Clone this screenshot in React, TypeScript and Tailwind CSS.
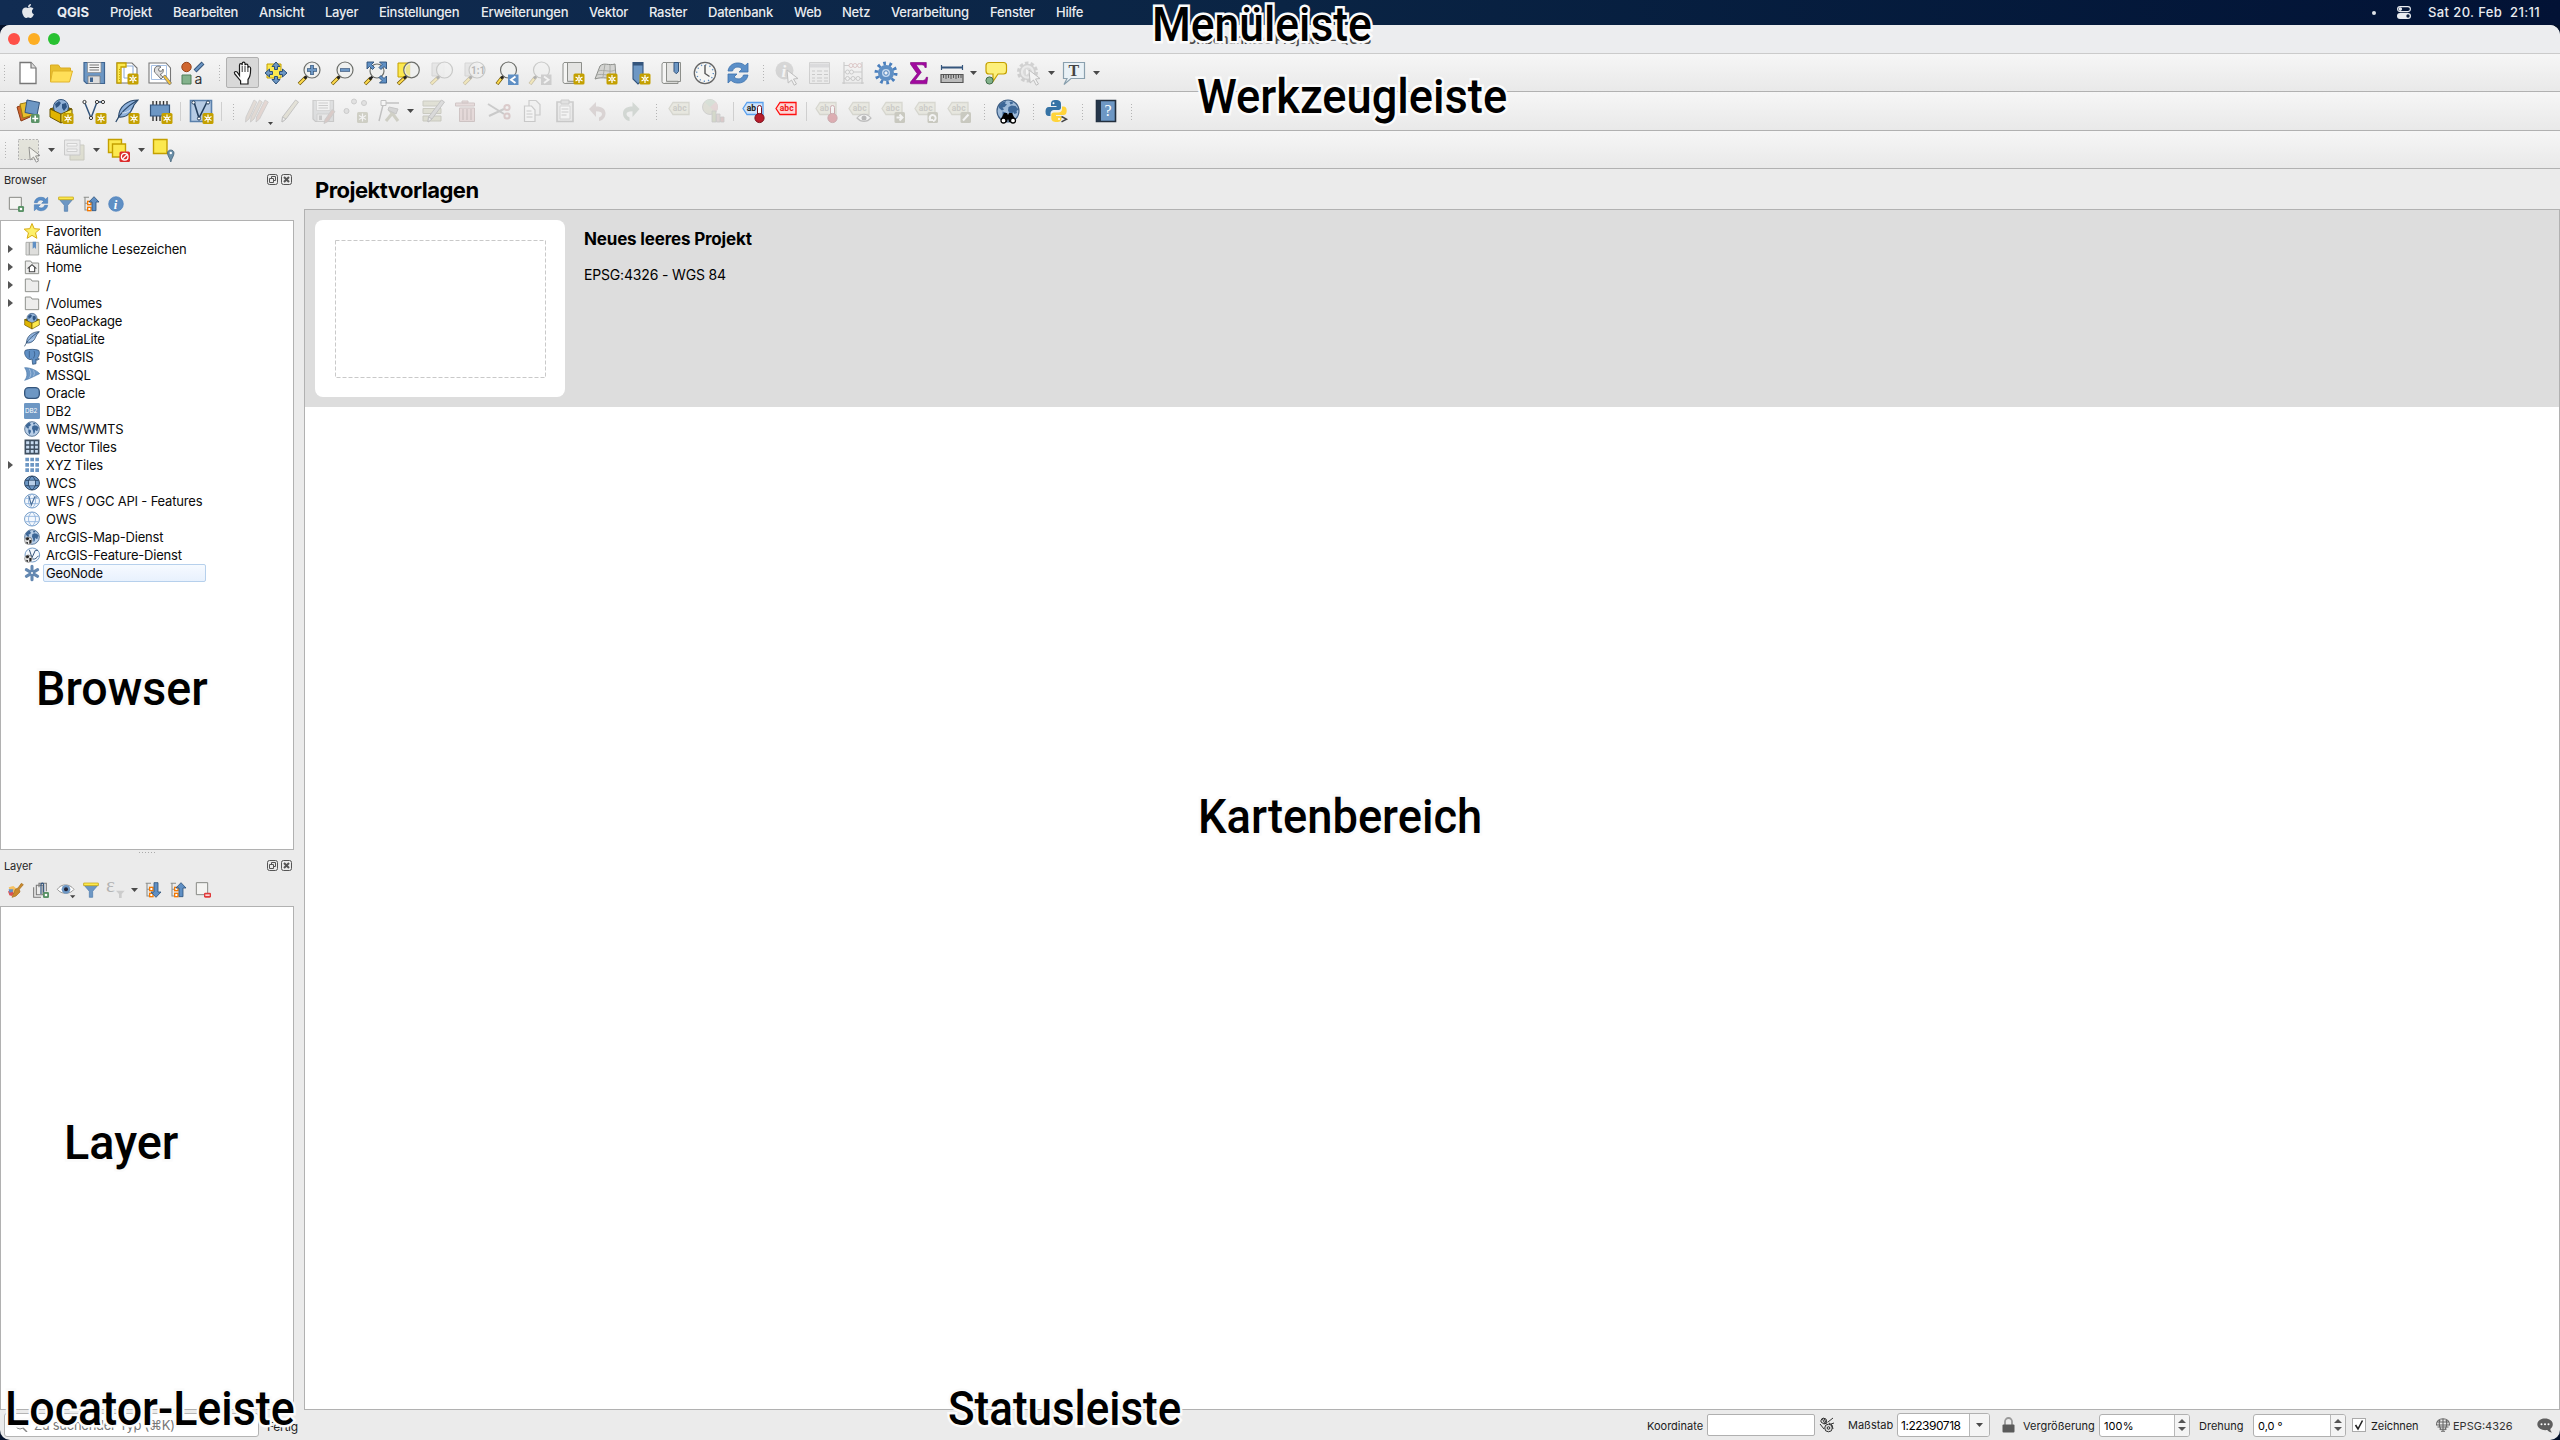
import type { ReactNode } from "react";

type Draw = { children: ReactNode; size?: string; faded?: boolean };

function Svg({ children, size = "size-6", faded }: Draw) {
  return (
    <svg viewBox="0 0 24 24" className={`${size} shrink-0 overflow-visible ${faded ? "opacity-30" : ""}`} fill="none">
      {children}
    </svg>
  );
}

/* ---------- shared icon parts ---------- */

const Badge = ({ x = 12.5, y = 12.5 }: { x?: number; y?: number }) => (
  <g transform={`translate(${x} ${y})`}>
    <rect width="11" height="11" rx="1.6" fill="#c4a000" />
    <path d="M5.5 1.5v8M2 3.5l7 4M9 3.5l-7 4" stroke="#fff" strokeWidth="1.2" />
    <circle cx="5.5" cy="5.5" r="1.7" fill="#fff" />
    <circle cx="5.5" cy="5.5" r=".7" fill="#c4a000" />
  </g>
);

const Lens = ({ cx = 14, cy = 9, r = 8 }: { cx?: number; cy?: number; r?: number }) => (
  <>
    <path d={`M2 23L${cx - 6} ${cy + 7}`} stroke="#6a5200" strokeWidth="3.6" />
    <path d={`M2.3 22.7L${cx - 6.2} ${cy + 7.2}`} stroke="#fcd94f" strokeWidth="2.2" />
    <path d={`M${cx - 7.6} ${cy + 8.6}l3-3`} stroke="#222" strokeWidth="2.6" />
    <circle cx={cx} cy={cy} r={r} fill="#eef0ee" fillOpacity=".85" stroke="#6d6f6b" strokeWidth="1.2" />
  </>
);

const Globe = ({ dark = false }: { dark?: boolean }) => (
  <>
    <circle cx="12" cy="12" r="11" fill={dark ? "#9fbbd9" : "#b9cfe8"} stroke="#3f5f85" strokeWidth="1.2" />
    <path
      d="M3 6.500l3-3 4-1.500-1 2.500 2 1-2.500 2.500-2 .5 1.500 2-2 1-3-2.500zM6.500 12.500l3.500 1 .5 2.500-2.500 4.500-1.500-4zM13.500 3l3-.5.5 2-2.500 1zM12.500 8l3-1.500 4 .5 3 3.500-2 1.500.5 2-2.500 1-1.500-2-1 5-1.500 1.500-1-5-1.500-3z"
      fill="#3d6797"
    />
  </>
);

const Tag = ({ stroke = "#9c9c84", fill = "#d5d5bd", color = "#77776a", text = "abc" }: { stroke?: string; fill?: string; color?: string; text?: string }) => (
  <>
    <path d="M1 9.500L5 3.500H21V15.500H5Z" fill={fill} stroke={stroke} strokeWidth="1.3" />
    <text x="4.800" y="12.400" fontSize="8.500" fontWeight="700" fontFamily="Roboto, sans-serif" fill={color}>{text}</text>
  </>
);

const Arrows = () => (
  <path
    d="M12 1l4 4.500h-2.500v3h-3v-3H8zM12 23l4-4.500h-2.500v-3h-3v3H8zM1 12l4.500-4v2.500h3v3h-3V16zM23 12l-4.500-4v2.500h-3v3h3V16z"
    fill="#6d97c4" stroke="#2c5078" strokeWidth="1"
  />
);

const Refresh = () => (
  <>
    <path d="M2 10C3 4 8 1.500 13 2c3 .3 4.500 1.200 6 2.700L22 2v9h-9l3-3c-3-3-8-2.500-9.500 2z" fill="#5b8fc8" stroke="#3d72ad" strokeWidth=".8" />
    <path d="M22 14c-1 6-6 8.500-11 8-3-.3-4.500-1.200-6-2.700L2 22v-9h9l-3 3c3 3 8 2.500 9.500-2z" fill="#5b8fc8" stroke="#3d72ad" strokeWidth=".8" />
  </>
);

const Scroll = () => (
  <>
    <path d="M5 1.500h15.500v19H5z" fill="#e4e4e2" stroke="#8d8f8b" />
    <path d="M3 1.500h3.500v21H4a2 2 0 0 1-2-2V3z" fill="#f5f5f4" stroke="#8d8f8b" />
    <path d="M4 22.500h14v-2.200H6.500" fill="#d8d8d6" stroke="#8d8f8b" />
  </>
);

const Feather = () => (
  <>
    <path d="M23 1C13 1 4 7 3.500 18c5 .5 9-1 12-5 1-2 3-5 3.500-7z" fill="#8fb2dc" stroke="#2c4a6c" strokeWidth="1.100" />
    <path d="M.8 23C4 16 11 8 22 1.500" stroke="#2c4a6c" strokeWidth="1.200" />
    <path d="M7 14c3 0 6-1 8.500-3" stroke="#e6eef7" strokeWidth=".8" />
  </>
);

const Package = () => (
  <>
    <path d="M1 10l11-4 11 4-11 5z" fill="#806600" stroke="#6b5600" />
    <circle cx="12" cy="8" r="7.500" fill="#8fb0d6" stroke="#34557c" />
    <path d="M6 5l4-3 2 2-2 3-3 2zM13 5l4-1 1 4-3 4-2-3z" fill="#2e5583" />
    <path d="M1 10l11 5v9L1 18z" fill="#e0b400" stroke="#6b5600" />
    <path d="M23 10l-11 5v9l11-6z" fill="#fce94f" stroke="#6b5600" />
  </>
);

const Tree = ({ up }: { up?: boolean }) => (
  <>
    <path d="M1 2h8M3 2v19h6M3 11h6" stroke="#8d8f8b" strokeWidth="1.600" />
    <rect x="7" y="8" width="5" height="5" fill="#fff" stroke="#f57900" strokeWidth="2" />
    <rect x="7" y="17" width="5" height="5" fill="#fff" stroke="#f57900" strokeWidth="2" />
    {up ? (
      <path d="M16.500 1L24 9h-4.500v13h-6V9H9z" fill="#5f8fc4" stroke="#2c5078" strokeWidth="1.200" />
    ) : (
      <path d="M16.500 23L24 15h-4.500V1h-6v14H9z" fill="#5f8fc4" stroke="#2c5078" strokeWidth="1.200" />
    )}
  </>
);

const Funnel = () => (
  <>
    <path d="M1 4h22l-8.500 10v9h-5v-9z" fill="#6d97c4" stroke="#4a78ab" />
    <path d="M1 1.500h22v4H1z" fill="#fce94f" stroke="#c4a000" />
  </>
);

const Cursor = () => <path d="M12 9l11 8.500-4.500 .5 3 5-2.300 1.200-2.700-5.200-3.300 3z" fill="#fff" stroke="#555" />;

const Pencil = ({ fill = "#8a6a3a" }: { fill?: string }) => (
  <>
    <path d="M17.500 1l3 2L8 20l-4 3 .5-5z" fill={fill} stroke="#555" strokeWidth=".9" />
    <path d="M4.500 18L8 20l-4 3z" fill="#eee" stroke="#555" strokeWidth=".9" />
  </>
);

const Thermo = () => (
  <>
    <path d="M15.500 8.500a2 2 0 0 1 4 0V16h-4z" fill="#fff" stroke="#7a1420" />
    <circle cx="17.500" cy="19" r="4.600" fill="#b81d2c" stroke="#7a1420" />
  </>
);

/* ---------- toolbar 1 ---------- */

const NewFile = () => (
  <Svg><path d="M4 1.500h11l5 5.500v15.500H4z" fill="#fff" stroke="#777" strokeWidth="1.300" /><path d="M15 1.500V7h5" fill="#ddd" stroke="#777" strokeWidth="1.200" /></Svg>
);
const OpenFolder = () => (
  <Svg>
    <path d="M1.500 20V4h8l2 3h10v4H5z" fill="#e8bf2e" stroke="#d9ab22" />
    <path d="M1.500 21l2-11h20l-3 11z" fill="#ffdf58" stroke="#e0b32b" />
  </Svg>
);
const Save = ({ faded }: { faded?: boolean }) => (
  <Svg faded={faded}>
    <path d="M2 1.500h20.500v21H4.500L2 20z" fill={faded ? "#b5b8bb" : "#6d97c4"} stroke={faded ? "#777" : "#3f6591"} strokeWidth="1.200" />
    <path d="M5.500 1.500h13.500v10H5.500z" fill="#f4f4f4" stroke="#888" strokeWidth=".7" />
    <path d="M7.500 4h9.500M7.500 6.500h9.500M7.500 9h9.500" stroke="#777" />
    <path d="M6 15h12v7.500H6z" fill="#ddd" stroke="#777" strokeWidth=".7" />
    <path d="M8 16.500h3V21H8z" fill={faded ? "#777" : "#3f6591"} />
    {faded && <path d="M13 24.500l1-4 7-10 3 2-7 10z" fill="#a87a70" stroke="#777" strokeWidth=".8" />}
  </Svg>
);
const Layout = () => (
  <Svg>
    <path d="M2 2h15l5 5v15H2z" fill="#fff" stroke="#777" strokeWidth="1.100" />
    <path d="M9 5h9v12h-9z" fill="#fff" stroke="#8aa9d6" />
    <path d="M2 2h9v4H6v16H2z" fill="#fce94f" stroke="#c4a000" strokeWidth="1.300" />
    <path d="M4.500 8v12" stroke="#c4a000" strokeDasharray="1 1.500" />
    <Badge />
  </Svg>
);
const LayoutManager = () => (
  <Svg>
    <path d="M1 2h17l4.500 5v15H1z" fill="#fff" stroke="#777" strokeWidth="1.100" />
    <path d="M3.500 4.500h15v14h-15z" stroke="#a6c0e4" />
    <path d="M6.500 8a4 4 0 0 1 6.500-2l-2.500 1.800.5 2.200 2.500.3L15 8a4 4 0 0 1-3 5.500l3 2.500-2 2-4.500-5A4 4 0 0 1 6.500 8z" fill="#ddd" stroke="#666" strokeWidth=".9" />
    <path d="M15 15.500l2-1.500 6.500 8-2 2z" fill="#f2c23c" stroke="#777" strokeWidth=".8" />
  </Svg>
);
const StyleManager = () => (
  <Svg>
    <circle cx="5.500" cy="6" r="4.700" fill="#d0662f" stroke="#96431a" />
    <path d="M14 10l8-8" stroke="#34557c" strokeWidth="4" /><path d="M14.500 9.500l7-7" stroke="#6d97c4" strokeWidth="2.200" />
    <path d="M1 14h9v9H1z" fill="#83b28c" stroke="#4f7f58" />
    <text x="13.500" y="22.500" fontSize="14" fontFamily="Inter, sans-serif" fill="#333">a</text>
  </Svg>
);
const Hand = () => (
  <Svg>
    <path d="M8.500 14.500V4.200c0-2 2.700-2 2.700 0V2.600c0-2 2.800-2 2.800 0v1.600c.3-1.700 2.900-1.500 2.900.3v2c.4-1.300 2.700-1 2.700.8 0 5 .2 8-2.600 11.200V23H9.600v-3.200C7.500 17.500 6 15.500 3.800 13c-1.300-1.800.9-3.300 2.400-1.900z" fill="#fff" stroke="#1c1c1c" strokeWidth="1.200" />
    <path d="M11.200 5v6M14 5v6M16.900 6v5" stroke="#1c1c1c" strokeWidth=".9" />
  </Svg>
);
const PanSelection = () => (<Svg><path d="M3 3h14v14H3z" fill="#fce94f" stroke="#c4a000" /><Arrows /></Svg>);
const ZoomIn = () => (<Svg><Lens cx={15} /><path d="M15 4v10M10 9h10" stroke="#34557c" strokeWidth="3.600" /><path d="M15 4.500v9M10.500 9h9" stroke="#6d97c4" strokeWidth="2" /></Svg>);
const ZoomOut = () => (<Svg><Lens cx={15} /><path d="M10 9h10" stroke="#34557c" strokeWidth="3.600" /><path d="M10.500 9h9" stroke="#6d97c4" strokeWidth="2" /></Svg>);
const ZoomFull = () => (
  <Svg>
    <Lens cx={14} cy={10} r={7} />
    <path d="M4 1h7L8.500 3.500l3 3-2 2-3-3L4 8zM23.500 1h-7L19 3.500l-3 3 2 2 3-3L23.500 8zM23.500 22h-7l2.500-2.500-3-3 2-2 3 3 2.500-2.500z" fill="#5f8fc4" stroke="#2c5078" strokeWidth=".9" />
  </Svg>
);
const ZoomSelection = () => (<Svg><path d="M2 2h12v14H2z" fill="#fce94f" stroke="#c4a000" /><Lens cx={15.500} cy={9} r={7.800} /><path d="M14 3.200a6 6 0 0 0 0 11.600z" fill="#ece27a" fillOpacity=".8" /></Svg>);
const ZoomLayer = () => (<Svg faded><path d="M3 2h12v13H3z" fill="#ccc" stroke="#999" /><Lens cx={15.500} /></Svg>);
const ZoomNative = () => (<Svg faded><path d="M3 2h12v13H3z" fill="#ccc" stroke="#999" /><Lens cx={15} /><text x="9" y="13" fontSize="10" fontWeight="700" fontFamily="Roboto, sans-serif" fill="#333">1:1</text></Svg>);
const ZoomLast = () => (<Svg><Lens cx={13.500} /><path d="M13 13.500h10.500V24H13z" fill="#5f8fc4" /><path d="M20.500 15.500l-4.500 3.300 4.500 3.300" stroke="#fff" strokeWidth="1.900" /></Svg>);
const ZoomNext = () => (<Svg faded><Lens cx={13.500} /><path d="M13 13.500h10.500V24H13z" fill="#888" /><path d="M16 15.500l4.500 3.300-4.500 3.300" stroke="#fff" strokeWidth="1.900" /></Svg>);
const NewMap = () => (<Svg><Scroll /><Badge /></Svg>);
const New3D = () => (
  <Svg>
    <path d="M6 5c4-4 9 0 15-2l1 13c-6 3-13-1-21 2z" fill="#d4d4d2" stroke="#8d8f8b" />
    <path d="M11 3l-2 13M16 4v13M4 10c6-2 12 2 17-1M2.500 14c7-2 13 2 19-1" stroke="#a5a7a3" strokeWidth=".9" />
    <Badge />
  </Svg>
);
const NewBookmark = () => (<Svg><path d="M6 1.500h10v17l-5 4.500-5-5z" fill="#6d97c4" stroke="#34557c" strokeWidth="1.100" /><path d="M6 1.500h10v3H6z" fill="#34557c" /><Badge /></Svg>);
const Bookmarks = () => (<Svg><Scroll /><path d="M14 1.500h4.500v9l-2.200 2.300L14 10.500z" fill="#6d97c4" stroke="#34557c" /></Svg>);
const Clock = () => (
  <Svg>
    <circle cx="12" cy="12" r="10.700" fill="#f6f6f4" stroke="#666" strokeWidth="1.300" />
    <circle cx="12" cy="12" r="8.300" stroke="#5f8fc4" strokeWidth="1.400" strokeDasharray="1.200 3.146" />
    <path d="M12 4v8.500l4.500 3" stroke="#555" strokeWidth="1.400" />
  </Svg>
);
const Identify = () => (<Svg faded><circle cx="9.500" cy="9.500" r="9" fill="#999" /><text x="6.500" y="16" fontSize="17" fontStyle="italic" fontWeight="700" fontFamily="Liberation Serif, serif" fill="#fff">i</text><Cursor /></Svg>);
const Table = () => (<Svg faded><path d="M1.500 1.500h20v21h-20z" fill="#e6e6e6" stroke="#888" /><path d="M2 4.500h19" stroke="#a5a5aa" strokeWidth="4" /><path d="M4 10h3M9 10h5M16 10h4M4 13.500h3M9 13.500h5M16 13.500h4M4 17h3M9 17h5M16 17h4M4 20h3M9 20h5M16 20h4" stroke="#777" strokeWidth="1.200" /></Svg>);
const Abacus = () => (
  <Svg faded>
    <path d="M3 1v22M21 1v22M3 4.500h18M3 11h18M3 17.500h18M1 22h22" stroke="#777" strokeWidth="1.200" />
    <g fill="#f4f4f4" stroke="#777">
      <circle cx="10" cy="4.500" r="2" stroke="#a66" /><circle cx="14" cy="4.500" r="2" stroke="#a66" /><circle cx="18.500" cy="4.500" r="2" stroke="#a66" />
      <circle cx="6.500" cy="11" r="2" /><circle cx="10.500" cy="11" r="2" />
      <circle cx="6.500" cy="17.500" r="2" /><circle cx="12" cy="17.500" r="2" /><circle cx="17" cy="17.500" r="2" />
    </g>
  </Svg>
);
const Gear = () => (
  <Svg>
    <circle cx="12" cy="12" r="9.500" stroke="#4a7fbd" strokeWidth="4" strokeDasharray="2.600 3.370" />
    <circle cx="12" cy="12" r="6" fill="#c4d8ee" stroke="#5f8fc4" strokeWidth="4" />
    <circle cx="12" cy="12" r="2.200" fill="#eef2f6" stroke="#4a7fbd" />
  </Svg>
);
const RunAction = () => (
  <Svg faded>
    <circle cx="10.500" cy="11" r="9" stroke="#888" strokeWidth="3" strokeDasharray="3.500 2.155" />
    <circle cx="10.500" cy="11" r="7.500" fill="#ddd" stroke="#888" strokeWidth="1.600" />
    <circle cx="10.500" cy="11" r="4.500" fill="#aaa" /><path d="M9 8l4.500 3L9 14z" fill="#fff" />
    <Cursor />
  </Svg>
);
const Sigma = () => (<Svg><path d="M3.500 1.500h15.800v5h-1.400c-.4-2-1.100-2.700-3.200-2.700H9l5.300 7.500L8 19.500h7.600c2.300 0 3-1 3.600-3.200h1.500l-.9 6.500H3.500V21l6.700-8.300-6.700-9.500z" fill="#a1099f" stroke="#7b007a" strokeWidth=".6" /></Svg>);
const Measure = () => (
  <Svg>
    <path d="M1.500 6.500h21" stroke="#34557c" strokeWidth="1.800" /><path d="M1.500 4v5M22.500 4v5" stroke="#34557c" strokeWidth="1.200" />
    <path d="M1 13.500h22v8H1z" fill="#bbb" stroke="#555" strokeWidth="1.200" />
    <path d="M3.500 14v3M6 14v4M8.500 14v3M11 14v4M13.500 14v3M16 14v4M18.500 14v3M21 14v3" stroke="#555" />
  </Svg>
);
const Tips = () => (
  <Svg>
    <path d="M5 1.500h14.500c2 0 3 1.300 3 3v5.500c0 2-1 3-3 3H14l-5 7.500V13H5c-2 0-3-1-3-3V4.500c0-1.700 1-3 3-3z" fill="#fdf07a" stroke="#c4a000" strokeWidth="1.200" />
    <circle cx="5.500" cy="19.500" r="3.600" fill="#83b28c" stroke="#3f6b48" />
  </Svg>
);
const Annotation = () => (
  <Svg>
    <path d="M1.500 1.500h21v16H9L2 23.500l3-6H1.500z" fill="#e9f1f6" stroke="#8aa0ae" strokeWidth="1.200" />
    <text x="6.500" y="14.800" fontSize="16" fontWeight="700" fontFamily="Liberation Serif, serif" fill="#444">T</text>
  </Svg>
);

/* ---------- toolbar 2 ---------- */

const AddLayer = () => (
  <Svg>
    <path d="M1 8l8-3 5 13-9 4z" fill="#d0662f" stroke="#8a3a14" />
    <path d="M4 5l9-2 4 13-10 3z" fill="#e8bf2e" stroke="#9a7a10" />
    <path d="M11 1l12.500 2.500L21 16 9 13.500z" fill="#6d97c4" stroke="#34557c" />
    <rect x="15" y="15" width="8.500" height="9" rx="1.500" fill="#5a9266" /><path d="M19.200 16.500v6M16.200 19.500h6" stroke="#fff" strokeWidth="1.600" />
  </Svg>
);
const NewGeoPackage = () => (<Svg><Package /><Badge x={13.500} y={14} /></Svg>);
const NewShape = () => (
  <Svg>
    <path d="M2.500 3L9 19l6-16h6" stroke="#34557c" strokeWidth="1.500" />
    <g fill="#fff" stroke="#333"><circle cx="2.500" cy="3" r="1.600" /><circle cx="9" cy="19" r="1.600" /><circle cx="15" cy="3" r="1.600" /><circle cx="21" cy="3" r="1.600" /></g>
    <Badge x={13.500} y={14} />
  </Svg>
);
const NewSpatialite = () => (<Svg><Feather /><Badge x={13.500} y={14} /></Svg>);
const NewMemory = () => (
  <Svg>
    <path d="M5 2v20M8.500 2v20M12 2v20M15.500 2v20M19 2v20" stroke="#333" strokeWidth="1.400" />
    <path d="M2.500 6h19v11h-19z" fill="#6d97c4" stroke="#34557c" strokeWidth="1.200" />
    <Badge x={13.500} y={14} />
  </Svg>
);
const NewVirtual = () => (
  <Svg>
    <path d="M1.500 1.500h21v21h-21z" fill="#b6cbe4" stroke="#5a80ab" strokeWidth="1.600" />
    <path d="M5 3l5 16 8-16" stroke="#25405f" strokeWidth="1.600" />
    <g fill="#fff" stroke="#25405f"><circle cx="4.500" cy="3.500" r="1.600" /><circle cx="10" cy="19.500" r="1.600" /><circle cx="19" cy="3.500" r="1.600" /></g>
    <Badge x={13.500} y={14} />
  </Svg>
);
const Edits = () => (
  <Svg faded>
    <path d="M9 1l2.800 2L4 20l-3.500 3 .5-5z" fill="#c2aa98" stroke="#777" strokeWidth=".8" />
    <path d="M14.500 1l2.800 2L9 20l-3.500 3 .5-5z" fill="#c2aa98" stroke="#777" strokeWidth=".8" />
    <path d="M20 1l3.300 2L14.500 20 11 23l.5-5z" fill="#c79c8e" stroke="#777" strokeWidth=".8" />
  </Svg>
);
const ToggleEdit = () => (<Svg faded><Pencil fill="#c4bd9c" /></Svg>);
const AddPoints = () => (
  <Svg faded>
    <g fill="#bbb" stroke="#777"><circle cx="10" cy="2.500" r="2.500" /><circle cx="2.500" cy="12" r="2.500" /><circle cx="20" cy="4" r="2.500" /></g>
    <g transform="translate(13 13)"><rect width="11" height="11" rx="1.600" fill="#8a8a6a" /><path d="M5.500 1.500v8M2 3.500l7 4M9 3.500l-7 4" stroke="#fff" strokeWidth="1.200" /></g>
  </Svg>
);
const VertexTool = () => (
  <Svg faded>
    <path d="M2 22L6 6M8 4h14" stroke="#555" strokeWidth="1.400" /><path d="M4 1.500h5v5H4z" fill="#fff" stroke="#555" />
    <path d="M9 22l9-11M12 10l9 12" stroke="#8a8a6a" strokeWidth="3" /><path d="M12 8l9 2-2 5-8-4z" fill="#999" stroke="#666" />
  </Svg>
);
const MultiEdit = () => (
  <Svg faded><path d="M2 2h18v5H2zM2 9.500h18v5H2zM2 17h18v5H2z" fill="#b9b995" stroke="#77775a" /><g transform="translate(3 0)"><Pencil fill="#aaa" /></g></Svg>
);
const Trash = () => (
  <Svg faded>
    <path d="M1.500 4h19v3h-19zM8 2h6v2H8z" fill="#d0aaaa" stroke="#866" /><path d="M5.500 9h15v13.500h-15z" fill="#d0aaaa" stroke="#866" />
    <path d="M9 10v11M13 10v11M17 10v11" stroke="#866" strokeWidth="1.400" />
  </Svg>
);
const Cut = () => (
  <Svg faded><path d="M1 5l16 10M2 17l15-7" stroke="#777" strokeWidth="2" /><circle cx="20" cy="8.500" r="2.600" stroke="#a77" strokeWidth="2" /><circle cx="20" cy="17" r="2.600" stroke="#a77" strokeWidth="2" /></Svg>
);
const Copy = () => (
  <Svg faded><path d="M9 1.500h7l4 4V16H9z" fill="#eee" stroke="#777" strokeWidth="1.200" /><path d="M4.500 7h7l3.500 4v11.500H4.500z" fill="#fff" stroke="#777" strokeWidth="1.200" /><path d="M6.500 12h5M6.500 15h6M6.500 18h6" stroke="#777" /></Svg>
);
const Paste = () => (
  <Svg faded><path d="M4 3h16v19.500H4z" fill="#ddd" stroke="#777" strokeWidth="1.600" /><path d="M8 1h8v4H8z" fill="#bbb" stroke="#777" /><path d="M7 7h10v13H7z" fill="#fff" stroke="#999" /><path d="M8.500 10h7M8.500 13h7M8.500 16h5" stroke="#777" /></Svg>
);
const Undo = () => (<Svg faded><path d="M3 10l7-7v4.500c6 0 9.500 2.500 9.500 7 0 4-3 7-6.500 7.500v-3.500c2-.8 3-2 3-3.500 0-2-2-2.800-6-2.800v5.800z" fill="#a89494" /></Svg>);
const Redo = () => (<Svg faded><path d="M20.500 10l-7-7v4.500c-6 0-9.500 2.500-9.500 7 0 4 3 7 6.500 7.500v-3.500c-2-.8-3-2-3-3.500 0-2 2-2.800 6-2.800v5.800z" fill="#8f9e93" /></Svg>);
const LabelOff = () => (<Svg faded><Tag /></Svg>);
const Diagram = () => (
  <Svg faded>
    <circle cx="9" cy="8" r="7.500" fill="#b5b59a" stroke="#777" strokeWidth=".8" /><path d="M9 8l6-5a7.500 7.500 0 0 1 0 10z" fill="#c79a9a" /><path d="M9 8L3.500 3a7.500 7.500 0 0 1 11 0z" fill="#9ab59a" />
    <path d="M11 12h4v11h-4z" fill="#9aa97a" stroke="#777" strokeWidth=".8" /><path d="M15.500 15h3.500v8h-3.500z" fill="#b59a9a" stroke="#777" strokeWidth=".8" /><path d="M19.500 18H23v5h-3.500z" fill="#b57a7a" stroke="#777" strokeWidth=".8" />
  </Svg>
);
const LabelPin = () => (<Svg><Tag stroke="#5aa0ee" fill="#cfe4fb" color="#222" text="ab" /><Thermo /></Svg>);
const LabelRed = () => (<Svg><Tag stroke="#ff1010" fill="#fdd6d6" color="#f01414" /></Svg>);
const LabelPinOff = () => (<Svg faded><Tag text="ab" /><Thermo /></Svg>);
const LabelEye = () => (<Svg faded><Tag /><path d="M9 19c4-5 10-5 14 0-4 4.500-10 4.500-14 0z" fill="#fff" stroke="#555" strokeWidth="1.200" /><circle cx="16" cy="19" r="2.500" fill="#444" /></Svg>);
const LabelBox = ({ d }: { d: string }) => (<Svg faded><Tag /><rect x="13.500" y="13" width="10.500" height="11" rx="1.500" fill="#77775a" /><path d={d} stroke="#fff" strokeWidth="2" /></Svg>);
const MetaSearch = () => (
  <Svg>
    <Globe dark />
    <path d="M5 20l3-6h3l1 2 1-2h3l3 6-2 3h-4l-1-3-1 3H7z" fill="#000" />
    <circle cx="7.500" cy="21.500" r="2.500" fill="#fff" stroke="#000" strokeWidth="1.300" /><circle cx="17" cy="21.500" r="2.500" fill="#fff" stroke="#000" strokeWidth="1.300" />
  </Svg>
);
const Python = () => (
  <Svg>
    <path d="M11 1c-4 0-5 1.500-5 4v2h5.500v1H4c-2.500 0-3.500 2-3.500 4.700S1.500 17 4 17h1.500v-2.500c0-2 1.500-3.500 3.500-3.500h4.500c1.700 0 2.500-1 2.500-2.500V5c0-3-2-4-5-4z" fill="#3673a5" />
    <path d="M11.500 23c4 0 5-1.500 5-4v-2H11v-1h7.500c2.500 0 3.200-2 3.200-4.500S20.500 7.500 18.500 7.500H17V10c0 2-1.500 3.500-3.500 3.500H9c-1.700 0-2.700 1-2.700 2.500v3c0 3 2.200 4 5.200 4z" fill="#ffd43b" />
    <circle cx="8.500" cy="4.200" r="1" fill="#fff" /><circle cx="14" cy="20" r="1" fill="#fff" />
    <path d="M16.500 17.500l5 2.700-5 2.700" stroke="#444" strokeWidth="1.500" />
  </Svg>
);
const Help = () => (
  <Svg>
    <path d="M2.500 1.500h19v21h-19z" fill="#6d97c4" stroke="#222e3c" strokeWidth="1.600" /><path d="M2.500 1.500H7v21H2.500z" fill="#25364a" />
    <text x="10.500" y="17" fontSize="16" fontFamily="Liberation Serif, serif" fill="#fff">?</text>
  </Svg>
);

/* ---------- toolbar 3 ---------- */

const SelectFeatures = () => (<Svg><g opacity=".4"><path d="M1.500 1.500h20v20h-20z" fill="#cfcfba" stroke="#555" strokeDasharray="2 1.500" /></g><g opacity=".55"><Cursor /></g></Svg>);
const SelectForm = () => (<Svg faded><path d="M8 7h14v15H8z" fill="#b9b98f" stroke="#77775a" /><path d="M2.500 2h15.500v15H2.500z" fill="#ddd" stroke="#777" /><path d="M5 5.500h10v2.500H5zM5 11h10v2.500H5z" fill="#fff" stroke="#888" /></Svg>);
const Deselect = () => (
  <Svg>
    <path d="M1.500 1.500h13v13h-13z" fill="#fce94f" stroke="#c4a000" strokeWidth="1.400" /><path d="M5.500 6h13v13h-13z" fill="#fce94f" stroke="#c4a000" strokeWidth="1.400" />
    <rect x="12.500" y="13.500" width="10.500" height="10.500" rx="1.500" fill="#dc2b2b" /><circle cx="17.700" cy="18.700" r="3.300" stroke="#fff" strokeWidth="1.300" /><path d="M15.500 21l4.500-4.500" stroke="#fff" strokeWidth="1.200" />
  </Svg>
);
const SelectLocation = () => (
  <Svg>
    <path d="M1.500 1.500h13.500v14H1.500z" fill="#fce94f" stroke="#c4a000" strokeWidth="1.400" />
    <path d="M15.500 15c0-4 6.500-4 6.500 0 0 3-2.300 5-3.200 9-.9-4-3.300-6-3.300-9z" fill="#6a8fa8" stroke="#46667c" strokeWidth=".8" /><circle cx="18.800" cy="15" r="1.200" fill="#fff" />
  </Svg>
);

/* ---------- panels ---------- */

const AddSmall = () => (<Svg size="size-4"><path d="M2 2h18v18H2z" fill="#f4f4f2" stroke="#888a85" strokeWidth="1.500" /><rect x="15" y="15" width="9" height="9" rx="2" fill="#5a9266" /><circle cx="19.500" cy="19.500" r="2" fill="#fff" /></Svg>);
const RemoveSmall = () => (<Svg size="size-4"><path d="M2 1h17v18H2z" fill="#f4f4f2" stroke="#888a85" strokeWidth="1.500" /><rect x="13.500" y="16" width="10.500" height="7.500" rx="2" fill="#e03a3a" /><path d="M15.500 19.700h6.500" stroke="#fff" strokeWidth="2" /></Svg>);
const Info = () => (<Svg size="size-4"><circle cx="12" cy="12" r="11" fill="#5f8fc4" stroke="#4a7fbd" /><text x="8.500" y="19" fontSize="19" fontStyle="italic" fontWeight="700" fontFamily="Liberation Serif, serif" fill="#fff">i</text></Svg>);
const Brush = () => (
  <Svg size="size-4">
    <path d="M1 8l7-2 5 4-4 5-6-1z" fill="#f6c163" /><path d="M0 14l6-1 3 4-3 4-4-1z" fill="#e05050" /><path d="M1 11l7 0-1 4-5 1z" fill="#5f8fc4" />
    <path d="M11 11l4-2 5-7 3 2-6 7 1 4-6 6-6 2z" fill="#c98a2d" stroke="#a56b1a" />
  </Svg>
);
const AddGroup = () => (
  <Svg size="size-4">
    <path d="M1 8v15h11M5 5v14h10V5zM9 8V2h11v12" stroke="#777" strokeWidth="1.600" fill="none" /><path d="M12 18V4c0-3 4-3 4 0v12" stroke="#34557c" strokeWidth="1.800" />
    <rect x="15" y="15" width="9" height="9" rx="2" fill="#5a9266" /><circle cx="19.500" cy="19.500" r="2" fill="#fff" />
  </Svg>
);
const Eye = () => (
  <Svg size="size-4">
    <path d="M-1 11C5 2 17 2 24 11c-6 8-19 8-25 0z" fill="#fff" stroke="#999" strokeWidth="1.500" /><circle cx="12" cy="11" r="6.500" fill="#6d97c4" /><circle cx="12" cy="11" r="3" fill="#223" />
    <path d="M18 20h8l-4 4.500z" fill="#444" />
  </Svg>
);
const Epsilon = () => (
  <Svg size="size-4" faded><text x="-3" y="15" fontSize="32" fontFamily="Liberation Serif, serif" fill="#333">ε</text><path d="M12 13h13l-4.500 5v6h-4v-6z" fill="#888" /></Svg>
);

const Star = () => (<Svg size="size-4"><path d="M12 .8l3.300 7.700 8.400.7-6.400 5.500 2 8.300L12 18.500 4.700 23l2-8.300L.3 9.200l8.400-.7z" fill="#fdf06a" stroke="#d8ac10" strokeWidth="1.500" /></Svg>);
const BookSmall = () => (<Svg size="size-4"><path d="M3 2h5v19H3zM8 2h14v19H8z" fill="#dededc" stroke="#a5a7a3" strokeWidth="1.300" /><path d="M13 1h5v11l-2.500-2.500L13 12z" fill="#5f8fc4" /></Svg>);
const FolderSmall = ({ home }: { home?: boolean }) => (
  <Svg size="size-4"><path d="M2 3h8l2 3h10v16H2z" fill="#ededec" stroke="#888a85" strokeWidth="1.400" />{home && <path d="M6.500 13.500l5.500-5 5.500 5H16V19H8v-5.500z" fill="#fff" stroke="#444" strokeWidth="1.600" />}</Svg>
);
const Elephant = () => (<Svg size="size-4"><path d="M2 2c6-2 15-2 20 0 2 3 1 9-2 12l3 1-4 2-1-2v7l-5 1-1-8-3 1-4-2C1 10 0 5 2 2z" fill="#5f8fc4" stroke="#34557c" strokeWidth="1.200" /><path d="M8 3v10M15 3c2 4 1 8-1 11" stroke="#34557c" /></Svg>);
const Sail = () => (<Svg size="size-4"><path d="M1 1c9 0 18 4 22.500 9C17 13 10 17 1 20c5-6 4-13 0-19z" fill="#6d97c4" stroke="#4a78ab" /><path d="M8 3c3 5 3 9 0 14M14 5c2 3 2 6 0 9" stroke="#b9cfe8" strokeWidth="1" /></Svg>);
const Oracle = () => (<Svg size="size-4"><rect x="1" y="4" width="22" height="16" rx="6" fill="#6d97c4" stroke="#34557c" strokeWidth="2" /></Svg>);
const Db2 = () => (<Svg size="size-4"><rect width="24" height="24" rx="2" fill="#6d97c4" /><text x="1.500" y="15" fontSize="9.500" fontFamily="Inter, sans-serif" fill="#fff">DB2</text></Svg>);
const GlobeSmall = () => (<Svg size="size-4"><Globe /></Svg>);
const Grid = () => (<Svg size="size-4"><path d="M2 2h20v20H2z" fill="#c8dbf0" stroke="#3f4f60" strokeWidth="2.400" /><path d="M9 2v20M15.500 2v20M2 9h20M2 15.500h20" stroke="#3f4f60" strokeWidth="2.200" /></Svg>);
const Dots = () => (<Svg size="size-4"><path d="M2 1h5.500v5.500H2zM9.500 1H15v5.500H9.500zM17 1h5.500v5.500H17zM2 9h5.500v5.500H2zM9.500 9H15v5.500H9.500zM17 9h5.500v5.500H17zM2 17h5.500v5.500H2zM9.500 17H15v5.500H9.500zM17 17h5.500v5.500H17z" fill="#6d97c4" /></Svg>);
const Wire = ({ v, dark }: { v?: boolean; dark?: boolean }) => (
  <Svg size="size-4">
    <ellipse cx="12" cy="12" rx="11.200" ry="10.500" fill={dark ? "#6d97c4" : "#f4f8fd"} stroke={dark ? "#25405f" : "#6d97c4"} strokeWidth="1.400" />
    <path d="M12 1.500c-7 5-7 16 0 21M12 1.500c7 5 7 16 0 21M2 8h20M2 16h20" stroke={dark ? "#25405f" : "#8fb2dc"} strokeWidth="1.300" />
    {dark && <path d="M7.500 8.500h9v7h-9z" fill="#b9cfe8" />}
    {v && <path d="M7 4l4 14 5-12h4" stroke="#4a6f9a" strokeWidth="1.800" />}
  </Svg>
);
const Arc = ({ v }: { v?: boolean }) => (
  <Svg size="size-4">
    {v ? <><ellipse cx="12.500" cy="12" rx="11" ry="10.500" fill="#f4f8fd" stroke="#6d97c4" strokeWidth="1.400" /><path d="M8 4l4 12 5-11h4M13 18c4 1 6-2 9-5" stroke="#34557c" strokeWidth="1.500" /></> : <Globe />}
    <circle cx="6.500" cy="17.500" r="5.500" fill="#e8e8e8" stroke="#444" strokeWidth=".8" />
    <path d="M3 13.500l3-1 2 1.500-1.500 3-3 0zM8 16l3.500 1-1 3.500-2.500 1.500zM3 19l3 1v2.500L4 21.500z" fill="#222" />
  </Svg>
);
const Asterisk = () => (<Svg size="size-4"><path d="M12 2v20M3.500 7l17 10M20.500 7L3.500 17" stroke="#6488b1" strokeWidth="4.600" strokeLinecap="round" /><circle cx="12" cy="12" r="1.500" fill="#fff" /></Svg>);

/* ---------- toolbar building blocks ---------- */

const Handle = ({ w = "w-4" }: { w?: string }) => (
  <div className={`${w} flex h-full shrink-0 items-center justify-end pr-1`}>
    <div className="h-[17px] w-1 bg-[radial-gradient(circle,#b4b4b4_0.7px,transparent_0.9px)] bg-[size:3px_3px]" />
  </div>
);
const Cell = ({ children }: { children: ReactNode }) => <div className="flex w-[33px] shrink-0 items-center justify-center">{children}</div>;
const Down = ({ w = "w-[11px]" }: { w?: string }) => (
  <div className={`${w} flex shrink-0 justify-center`}>
    <svg viewBox="0 0 7 4" className="h-1 w-[7px]"><path d="M0 0h7L3.500 4z" fill="#4a4a4a" /></svg>
  </div>
);
const Sep = ({ w = "w-2" }: { w?: string }) => (<div className={`${w} flex shrink-0 justify-center`}><div className="h-[19px] w-px bg-[#cfcfcf]" /></div>);
const Bar = ({ h, children }: { h: string; children: ReactNode }) => (
  <div className={`${h} flex shrink-0 items-center border-b border-[#b1b1b1] bg-linear-to-b from-[#f6f6f6] to-[#e9e9e9]`}>{children}</div>
);
const cells = (icons: ReactNode[]) => icons.map((icon, i) => <Cell key={i}>{icon}</Cell>);

const menus: [string, string][] = [
  ["Projekt", "w-[63px]"], ["Bearbeiten", "w-[86px]"], ["Ansicht", "w-[66px]"], ["Layer", "w-[54px]"], ["Einstellungen", "w-[102px]"],
  ["Erweiterungen", "w-[108px]"], ["Vektor", "w-[60px]"], ["Raster", "w-[59px]"], ["Datenbank", "w-[86px]"], ["Web", "w-[48px]"],
  ["Netz", "w-[49px]"], ["Verarbeitung", "w-[99px]"], ["Fenster", "w-[66px]"], ["Hilfe", "w-[60px]"],
];

function MenuBar() {
  return (
    <div className="flex h-[25px] shrink-0 items-center bg-linear-to-r from-[#112c52] via-[#0a2444] to-[#021235] text-[13px] font-medium tracking-[-0.25px] text-[#e9ecf0]">
      <svg viewBox="0 0 384 512" className="ml-[21px] mb-1 h-4 w-3.5" fill="#e4e7eb">
        <path d="M318.700 268.700c-.2-36.700 16.400-64.400 50-84.800-18.800-26.900-47.200-41.700-84.700-44.600-35.500-2.800-74.300 20.700-88.500 20.700-15 0-49.400-19.700-76.400-19.700C63.300 141.200 4 184.800 4 273.500q0 39.300 14.400 81.200c12.800 36.700 59 126.700 107.200 125.200 25.200-.6 43-17.900 75.800-17.900 31.800 0 48.300 17.900 76.400 17.900 48.600-.7 90.400-82.500 102.600-119.300-65.200-30.700-61.700-90-61.700-91.900zm-56.600-164.200c27.300-32.400 24.800-61.900 24-72.500-24.100 1.400-52 16.400-67.900 34.900-17.500 19.800-27.800 44.300-25.600 71.900 26.100 2 49.900-11.400 69.500-34.300z" />
      </svg>
      <span className="ml-[22px] w-[53px] font-bold tracking-normal">QGIS</span>
      {menus.map(([name, w]) => <span key={name} className={`${w} shrink-0`}>{name}</span>)}
      <span className="ml-auto size-1 rounded-full bg-[#dfe3e8]" />
      <svg viewBox="0 0 14 13" className="ml-[21px] h-[13px] w-3.5">
        <rect x=".6" y=".6" width="12.800" height="5" rx="2.500" fill="none" stroke="#e9ecf0" strokeWidth="1.100" /><circle cx="3.300" cy="3.100" r="1.800" fill="#e9ecf0" />
        <rect y="7" width="14" height="6" rx="3" fill="#e9ecf0" /><circle cx="11" cy="10" r="1.700" fill="#0a1c3c" />
      </svg>
      <span className="ml-[17px] w-[132px] whitespace-pre tracking-[0.4px]">Sat 20. Feb  21:11</span>
    </div>
  );
}

function PanelTitle({ children }: { children: string }) {
  return (
    <div className="flex h-[22px] items-center pl-1 pr-0.5 text-[11px] tracking-[-0.1px] text-[#262626]">
      <span>{children}</span>
      <svg viewBox="0 0 25 11" className="mb-px ml-auto h-[11px] w-[25px]" fill="none" stroke="#555">
        <rect x=".5" y=".5" width="10" height="10" rx="2" /><path d="M4.500 4.500V2.500h4v4H6.500" /><path d="M2.500 4.500h4v4h-4z" />
        <rect x="14.500" y=".5" width="10" height="10" rx="2" /><path d="M17 3l5 5M22 3l-5 5" strokeWidth="2" />
      </svg>
    </div>
  );
}

const rows: { label: string; icon: ReactNode; open?: boolean }[] = [
  { label: "Favoriten", icon: <Star /> },
  { label: "Räumliche Lesezeichen", icon: <BookSmall />, open: true },
  { label: "Home", icon: <FolderSmall home />, open: true },
  { label: "/", icon: <FolderSmall />, open: true },
  { label: "/Volumes", icon: <FolderSmall />, open: true },
  { label: "GeoPackage", icon: <Svg size="size-4"><Package /></Svg> },
  { label: "SpatiaLite", icon: <Svg size="size-4"><Feather /></Svg> },
  { label: "PostGIS", icon: <Elephant /> },
  { label: "MSSQL", icon: <Sail /> },
  { label: "Oracle", icon: <Oracle /> },
  { label: "DB2", icon: <Db2 /> },
  { label: "WMS/WMTS", icon: <GlobeSmall /> },
  { label: "Vector Tiles", icon: <Grid /> },
  { label: "XYZ Tiles", icon: <Dots />, open: true },
  { label: "WCS", icon: <Wire dark /> },
  { label: "WFS / OGC API - Features", icon: <Wire v /> },
  { label: "OWS", icon: <Wire /> },
  { label: "ArcGIS-Map-Dienst", icon: <Arc /> },
  { label: "ArcGIS-Feature-Dienst", icon: <Arc v /> },
  { label: "GeoNode", icon: <Asterisk /> },
];

function Docks() {
  return (
    <div className="flex w-[294px] shrink-0 flex-col">
      <PanelTitle>Browser</PanelTitle>
      <div className="flex h-[29px] items-center gap-[9px] pl-2 pb-1">
        <AddSmall /><Svg size="size-4"><Refresh /></Svg><Svg size="size-4"><Funnel /></Svg><Svg size="size-4"><Tree up /></Svg><Info />
      </div>
      <div className="h-[630px] border border-[#b1b1b1] bg-white pt-px">
        {rows.map(({ label, icon, open }) => (
          <div key={label} className="flex h-[18px] items-center text-[13px] tracking-[-0.19px] text-[#0a0a0a]">
            <div className="flex w-[23px] justify-center pr-3 pl-2">{open && <svg viewBox="0 0 5 8" className="h-2 w-[5px] shrink-0"><path d="M0 0l5 4-5 4z" fill="#555" /></svg>}</div>
            {icon}
            <span className={`ml-[3px] flex h-[18px] w-[163px] items-center whitespace-nowrap rounded-[2px] border pt-px pl-[2px] ${label === "GeoNode" ? "border-[#b6d0ec] bg-linear-to-b from-[#f6faff] to-[#e8f1fd]" : "border-transparent"}`}>{label}</span>
          </div>
        ))}
      </div>
      <div className="flex h-[5px] items-center justify-center"><div className="h-px w-[17px] bg-[repeating-linear-gradient(90deg,#aaa_0_1px,transparent_1px_3px)]" /></div>
      <PanelTitle>Layer</PanelTitle>
      <div className="flex h-[29px] items-center pb-1 pl-2">
        <div className="flex gap-[9px]"><Brush /><AddGroup /><Eye /><Svg size="size-4"><Funnel /></Svg><Epsilon /></div>
        <div className="mr-[4px] ml-[4px]"><Down w="w-[13px]" /></div>
        <div className="flex gap-[9px]"><Svg size="size-4"><Tree /></Svg><Svg size="size-4"><Tree up /></Svg><RemoveSmall /></div>
      </div>
      <div className="min-h-0 flex-1 border border-[#b1b1b1] bg-white" />
    </div>
  );
}

function Start() {
  return (
    <div className="ml-2.5 flex min-w-0 flex-1 flex-col">
      <div className="flex h-10 shrink-0 items-center pt-1 pb-px pl-[11px] text-[22px] font-bold tracking-[-0.53px] text-black">Projektvorlagen</div>
      <div className="flex-1 border border-[#b1b1b1] bg-white">
        <div className="flex h-[197px] bg-[#dddddd] py-2.5 pl-2.5">
          <div className="h-[177px] w-[250px] rounded-lg bg-white p-5">
            <svg className="h-[138px] w-[211px]" viewBox="0 0 211 138"><rect x=".5" y=".5" width="210" height="137" fill="none" stroke="#c9c9c9" strokeDasharray="4 2" /></svg>
          </div>
          <div className="ml-[19px] pt-[7px] text-black">
            <div className="text-[17px] leading-6 font-bold tracking-[-0.17px]">Neues leeres Projekt</div>
            <div className="mt-3 text-[14px] leading-6 tracking-[-0.17px]">EPSG:4326 - WGS 84</div>
          </div>
        </div>
      </div>
    </div>
  );
}

const Spin = () => (
  <div className="flex h-full w-[15px] flex-col items-center justify-center gap-1 border-l border-[#b8b8b8] bg-[#f4f4f4]">
    <svg viewBox="0 0 8 4" className="h-1 w-2"><path d="M0 4h8L4 0z" fill="#555" /></svg>
    <svg viewBox="0 0 8 4" className="h-1 w-2"><path d="M0 0h8L4 4z" fill="#555" /></svg>
  </div>
);

function StatusBar() {
  return (
    <div className="flex h-[30px] shrink-0 items-center text-[11px] text-[#1c1c1c]">
      <div className="ml-1 flex h-6 w-[255px] items-center rounded-[3px] border border-[#b4b4b4] bg-white pt-0.5 pl-2.5 text-[13px] tracking-[-0.26px] text-[#777]">
        <svg viewBox="0 0 14 12" className="mr-[5px] h-3 w-3.5" fill="none" stroke="#888"><circle cx="5" cy="5" r="4" /><path d="M8 8l4 4" strokeWidth="1.500" /></svg>
        Zu suchender Typ (⌘K)
      </div>
      <span className="ml-2 pt-1 text-[12px] tracking-[-0.3px]">Fertig</span>
      <div className="ml-auto flex h-full items-center">
        <span className="w-[60px] pt-0.5">Koordinate</span>
        <div className="h-[22px] w-[108px] rounded-[2px] border border-[#b0b0b0] bg-white" />
        <svg viewBox="0 0 16 16" className="ml-1 mr-[13px] size-4" fill="none" stroke="#333">
          <path d="M2 3l2-2 3 1 1 4-3 1-3-2zM3 1l3 6M5 1l2 5" /><circle cx="9.500" cy="11" r="3.800" fill="#ddd" /><circle cx="9.500" cy="11" r="1.300" /><path d="M9 5l5-4M12 7l3-1M10 6l3 2 1 4" /><path d="M1 7l4 5" />
        </svg>
        <span className="w-[49px]">Maßstab</span>
        <div className="flex h-6 w-[93px] items-center overflow-hidden rounded-[3px] border border-[#b0b0b0] bg-white">
          <span className="flex-1 pt-0.5 pl-[3px] text-[12px] tracking-[-0.47px] text-black">1:22390718</span>
          <div className="flex h-full w-5 items-center justify-center border-l border-[#b8b8b8] bg-[#f4f4f4]"><Down /></div>
        </div>
        <svg viewBox="0 0 13 16" className="ml-3 h-4 w-[13px]"><path d="M3 8V4.500a3.500 3.500 0 0 1 7 0V8" fill="none" stroke="#999" strokeWidth="1.800" /><rect x=".5" y="7.500" width="12" height="8" rx="1" fill="#5a5a5a" /></svg>
        <span className="ml-2 w-[76px] pt-0.5">Vergrößerung</span>
        <div className="flex h-[23px] w-[91px] items-center overflow-hidden rounded-[3px] border border-[#b0b0b0] bg-white"><span className="flex-1 pt-0.5 pl-1 tracking-[0.1px] text-black">100%</span><Spin /></div>
        <span className="ml-[9px] w-[54px] pt-0.5">Drehung</span>
        <div className="flex h-[23px] w-[93px] items-center overflow-hidden rounded-[3px] border border-[#b0b0b0] bg-white"><span className="flex-1 pt-0.5 pl-1 text-black">0,0 °</span><Spin /></div>
        <svg viewBox="0 0 14 14" className="ml-1.5 size-3.5"><rect x=".5" y=".5" width="13" height="13" fill="#fff" stroke="#aaa" /><path d="M3.500 7l2.500 4 4.500-8.500" fill="none" stroke="#222" strokeWidth="1.600" /></svg>
        <span className="ml-[5px] w-16 pt-0.5 tracking-[-0.1px]">Zeichnen</span>
        <svg viewBox="0 0 16 14" className="h-3.5 w-4" fill="none" stroke="#666"><path d="M1.500 7C1 3 4.500.8 8 .8S15 3 14.500 7zM2.500 9h11M4.500 11.200h7M6 13.200h4M8 1v12.500M5 1.800C4 4 4 8 6 12M11 1.800c1 2.200 1 6.200-1 10.200M2 4h12" strokeWidth="1.100" /></svg>
        <span className="ml-0.5 w-[84px] pt-0.5 text-[#333]">EPSG:4326</span>
        <svg viewBox="0 0 16 15" className="mr-[7px] h-[15px] w-4"><path d="M8 .5c4.500 0 7.800 2.500 7.800 5.800 0 2.300-1 3.700-2.500 4.600.1 1.500.8 2.700 1.700 3.600-2-.1-3.700-1-4.700-2.500-5.500.8-10-1.700-10-5.700C.3 3 3.500.5 8 .5z" fill="#5e5e5e" /><circle cx="4.500" cy="6.300" r="1" fill="#fff" /><circle cx="8" cy="6.300" r="1" fill="#fff" /><circle cx="11.500" cy="6.300" r="1" fill="#fff" /></svg>
      </div>
    </div>
  );
}

const captions: [string, string][] = [
  ["Menüleiste", "left-[1152px] top-[-5px] scale-x-[0.925]"],
  ["Werkzeugleiste", "left-[1197px] top-[67px] scale-x-[0.942]"],
  ["Browser", "left-[36px] top-[659px] scale-x-[0.97]"],
  ["Kartenbereich", "left-[1198px] top-[787px] scale-x-[0.942]"],
  ["Layer", "left-[64px] top-[1113px] scale-x-[0.975]"],
  ["Locator-Leiste", "left-[5px] top-[1379px] scale-x-[0.934]"],
  ["Statusleiste", "left-[948px] top-[1379px] scale-x-[0.915]"],
];

export default function App() {
  return (
    <div className="relative flex h-[1440px] w-[2560px] flex-col overflow-hidden bg-[#04122b] font-['Inter',sans-serif]">
      <MenuBar />
      <div className="flex min-h-0 flex-1 flex-col overflow-hidden rounded-[10px] bg-[#ebebeb]">
        <div className="flex h-[29px] shrink-0 items-center border-b border-[#cbcbcb] bg-[#ecedef] pl-2">
          <div className="flex gap-2">
            <span className="size-3 rounded-full bg-[#fe5048]" /><span className="size-3 rounded-full bg-[#fdae24]" /><span className="size-3 rounded-full bg-[#28c131]" />
          </div>
          <span className="ml-[1127px] pt-0.5 text-[13px] font-semibold tracking-[0.05px] text-[#4b4b4b]">Unbenanntes Projekt — QGIS</span>
        </div>
        <Bar h="h-[38px]">
          <Handle w="w-[11px]" />
          {cells([<NewFile />, <OpenFolder />, <Save />, <Layout />, <LayoutManager />, <StyleManager />])}
          <Handle w="w-[17px]" />
          <div className="flex h-[31px] w-[33px] shrink-0 items-center justify-center rounded-[2px] border border-[#b0b0b0] bg-[#d8d8d8]"><Hand /></div>
          {cells([<PanSelection />, <ZoomIn />, <ZoomOut />, <ZoomFull />, <ZoomSelection />, <ZoomLayer />, <ZoomNative />, <ZoomLast />, <ZoomNext />, <NewMap />, <New3D />, <NewBookmark />, <Bookmarks />, <Clock />, <Svg><Refresh /></Svg>])}
          <Handle />
          {cells([<Identify />, <Table />, <Abacus />, <Gear />, <Sigma />, <Measure />])}
          <Down />
          {cells([<Tips />, <RunAction />])}
          <Down w="w-3" />
          {cells([<Annotation />])}
          <Down w="w-3" />
        </Bar>
        <Bar h="h-[39px]">
          <Handle w="w-[11px]" />
          {cells([<AddLayer />, <NewGeoPackage />, <NewShape />, <NewSpatialite />, <NewMemory />])}
          <Sep />
          {cells([<NewVirtual />])}
          <Sep />
          <Handle w="w-[15px]" />
          {cells([<div className="relative"><Edits /><svg viewBox="0 0 5 3" className="absolute -right-1 -bottom-0.5 h-[3px] w-[5px]"><path d="M0 0h5L2.500 3z" fill="#444" /></svg></div>, <ToggleEdit />, <Save faded />, <AddPoints />, <VertexTool />])}
          <Down />
          {cells([<MultiEdit />, <Trash />, <Cut />, <Copy />, <Paste />, <Undo />, <Redo />])}
          <Handle w="w-4" />
          {cells([<LabelOff />, <Diagram />])}
          <Sep />
          {cells([<LabelPin />, <LabelRed />])}
          <Sep w="w-[7px]" />
          {cells([<LabelPinOff />, <LabelEye />, <LabelBox d="M15.500 18.500h6M18.500 15.500l3 3-3 3" />, <LabelBox d="M16 20.500a3 3 0 1 1 3 1.500M16 17v4h3" />, <LabelBox d="M16 21.500l5.500-6" />])}
          <Handle />
          {cells([<MetaSearch />])}
          <Handle />
          {cells([<Python />])}
          <Handle />
          {cells([<Help />])}
          <Handle />
        </Bar>
        <Bar h="h-[38px]">
          <Handle w="w-3" />
          {cells([<SelectFeatures />])}<Down w="w-3" />
          {cells([<SelectForm />])}<Down w="w-3" />
          {cells([<Deselect />])}<Down w="w-3" />
          {cells([<SelectLocation />])}
        </Bar>
        <div className="flex min-h-0 flex-1">
          <Docks />
          <Start />
        </div>
        <StatusBar />
      </div>
      {captions.map(([text, place]) => (
        <span key={text} className={`${place} absolute origin-left whitespace-nowrap font-['Roboto',sans-serif] text-[48px] leading-[60px] font-medium text-black [paint-order:stroke_fill] [-webkit-text-stroke:5px_#fbfbfb]`}>{text}</span>
      ))}
    </div>
  );
}
